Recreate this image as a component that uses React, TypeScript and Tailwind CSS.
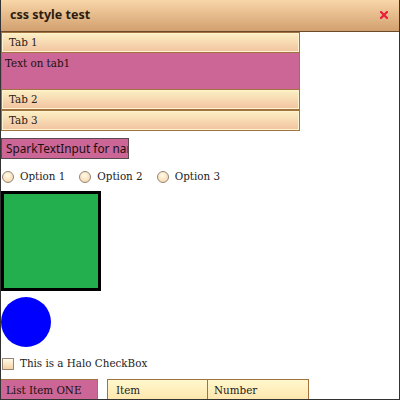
import React from "react";

const serif = "font-['DejaVu_Serif',serif] [font-stretch:condensed] text-[11.5px] leading-none";

function TabHeader({ label }: { label: string }) {
  return (
    <div className="h-[21px] border border-[#a2723f] shadow-[inset_0_0_0_1px_#fff3cf] bg-gradient-to-b from-[#fcf0c4] to-[#f1c3a0] flex items-center pl-[7px]">
      <span className={`${serif} text-[#2a2018]`}>{label}</span>
    </div>
  );
}

function Radio({ label }: { label: string }) {
  return (
    <div className="flex items-center gap-[6px]">
      <span className="w-[12px] h-[12px] rounded-full border border-[#958575] bg-[radial-gradient(circle_at_45%_35%,#fffbe6,#f6d0a4)]" />
      <span className={`${serif} text-[#222]`}>{label}</span>
    </div>
  );
}

export default function App() {
  return (
    <div className="w-[400px] h-[400px] bg-white overflow-hidden flex flex-col border-x border-b border-[#333]">
      {/* title bar */}
      <div className="h-[32px] shrink-0 border-b border-[#6e4a2c] bg-gradient-to-b from-[#f8d6a8] to-[#d2a06f] flex items-center justify-between pl-[9px] pr-[11px]">
        <span className="font-['Noto_Sans',sans-serif] font-bold text-[12.5px] text-[#2a1c10]">css style test</span>
        <svg width="8" height="8" viewBox="0 0 8 8" className="mb-[2px]">
          <path d="M1 1L7 7M7 1L1 7" stroke="#ec1c3c" strokeWidth="2.2" strokeLinecap="square" />
        </svg>
      </div>

      <div className="flex flex-col">
        {/* accordion */}
        <div className="w-[299px] flex flex-col">
          <TabHeader label="Tab 1" />
          <div className="h-[36px] bg-[#cb6696] border-x border-[#a2723f] flex items-start px-[3px] pt-[5px]">
            <span className={`${serif} text-[#1a1010]`}>Text on tab1</span>
          </div>
          <TabHeader label="Tab 2" />
          <TabHeader label="Tab 3" />
        </div>

        {/* text input */}
        <div className="mt-[7px] w-[128px] h-[21px] bg-[#cb6696] border border-[#5a4a50] overflow-hidden whitespace-nowrap flex items-center pl-[4px]">
          <span className="font-['Noto_Sans',sans-serif] text-[11.8px] leading-none text-[#1a1010]">SparkTextInput for name</span>
        </div>

        {/* radios */}
        <div className="mt-[11px] h-[13px] flex items-center gap-[14px] pl-[1px]">
          <Radio label="Option 1" />
          <Radio label="Option 2" />
          <Radio label="Option 3" />
        </div>

        {/* green square */}
        <div className="mt-[8px] w-[100px] h-[100px] bg-[#24af4f] border-[3px] border-black" />

        {/* blue circle */}
        <div className="mt-[6px] w-[50px] h-[50px] rounded-full bg-[#0000ff]" />

        {/* checkbox */}
        <div className="mt-[10px] h-[13px] flex items-center gap-[6px] pl-[1px]">
          <span className="w-[12px] h-[12px] border border-[#958575] bg-gradient-to-b from-[#fffbe6] to-[#f6d0a4]" />
          <span className={`${serif} text-[#222]`}>This is a Halo CheckBox</span>
        </div>

        {/* list + grid */}
        <div className="mt-[9px] flex items-start gap-[9px]">
          <div className="w-[97px] h-[21px] bg-[#cb6696] border-r border-t border-[#a2723f] flex items-start pl-[5px] pt-[5px]">
            <span className={`${serif} text-[#1a1010]`}>List Item ONE</span>
          </div>
          <div className="flex border border-b-0 border-[#a2723f] bg-gradient-to-b from-[#fff8cc] to-[#ffe6ad] h-[21px]">
            <div className="w-[100px] border-r border-[#a2723f] flex items-start pl-[8px] pt-[5px]">
              <span className={`${serif} text-[#222]`}>Item</span>
            </div>
            <div className="w-[100px] flex items-start pl-[6px] pt-[5px]">
              <span className={`${serif} text-[#222]`}>Number</span>
            </div>
          </div>
        </div>
      </div>
    </div>
  );
}
